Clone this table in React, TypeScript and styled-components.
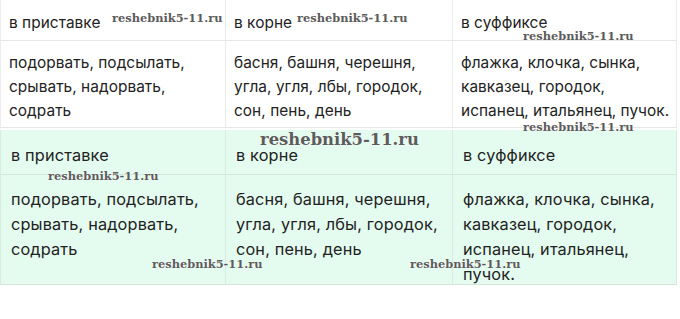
import styled, { createGlobalStyle } from 'styled-components';

const Global = createGlobalStyle`
  body {
    margin: 0;
    background: #fff;
    font-family: Inter, "Noto Sans", sans-serif;
    color: #222;
  }
`;

const Page = styled.div`
  position: relative;
  width: 680px;
  height: 319px;
  overflow: hidden;
`;

const Table = styled.div<{ $green?: boolean; $size: number }>`
  display: grid;
  grid-template-columns: 226px 227px 224px;
  width: 677px;
  background: ${(p) => (p.$green ? '#e4fbef' : '#fff')};
  font-size: ${(p) => p.$size}px;
  letter-spacing: ${(p) => (p.$green ? '0.15px' : '0.05px')};
  margin-top: ${(p) => (p.$green ? '2px' : '0')};
`;

const Cell = styled.div<{ $head?: boolean; $green?: boolean }>`
  box-sizing: border-box;
  border-right: 1px solid ${(p) => (p.$green ? '#d8ecdf' : '#ececec')};
  border-bottom: 1px solid ${(p) => (p.$green ? '#d2e6d9' : '#e6e6e6')};
  padding: ${(p) =>
    p.$head
      ? p.$green ? '13px 10px 0' : '11px 8px 0'
      : p.$green ? '12px 10px 0' : '10px 2px 0 8px'};
  height: ${(p) =>
    p.$head ? (p.$green ? '45px' : '41px') : p.$green ? '110px' : '87px'};
  line-height: ${(p) => (p.$green ? '25px' : '24px')};
  &:nth-child(3n + 1) {
    border-left: 1px solid ${(p) => (p.$green ? '#d8ecdf' : '#ececec')};
  }
`;

const Mark = styled.span<{ $x: number; $y: number; $big?: boolean }>`
  position: absolute;
  left: ${(p) => p.$x}px;
  top: ${(p) => p.$y}px;
  font-family: "DejaVu Serif", "Liberation Serif", serif;
  font-weight: bold;
  font-size: ${(p) => (p.$big ? '16.4px' : '11.4px')};
  color: #5c5c5c;
  text-shadow: 0 0 1px #fff, 0 0 1px #fff;
  white-space: nowrap;
  pointer-events: none;
`;

const heads = ['в приставке', 'в корне', 'в суффиксе'];
const bodies = [
  'подорвать, подсылать, срывать, надорвать, содрать',
  'басня, башня, черешня, угла, угля, лбы, городок, сон, пень, день',
  'флажка, клочка, сынка, кавказец, городок, испанец, итальянец, пучок.',
];

function WordTable({ green }: { green?: boolean }) {
  return (
    <Table $green={green} $size={green ? 16.3 : 15.4}>
      {heads.map((h) => (
        <Cell key={h} $head $green={green}>{h}</Cell>
      ))}
      {bodies.map((b) => (
        <Cell key={b} $green={green}>{b}</Cell>
      ))}
    </Table>
  );
}

// watermark stamps laid over both tables
const marks = [
  { x: 112, y: 11 },
  { x: 297, y: 11 },
  { x: 523, y: 29 },
  { x: 523, y: 120 },
  { x: 48, y: 169 },
  { x: 152, y: 257 },
  { x: 410, y: 257 },
];

export default function App() {
  return (
    <Page>
      <Global />
      <WordTable />
      <WordTable green />
      {marks.map((m, i) => (
        <Mark key={i} $x={m.x} $y={m.y}>reshebnik5-11.ru</Mark>
      ))}
      <Mark $x={260} $y={130} $big>reshebnik5-11.ru</Mark>
    </Page>
  );
}
